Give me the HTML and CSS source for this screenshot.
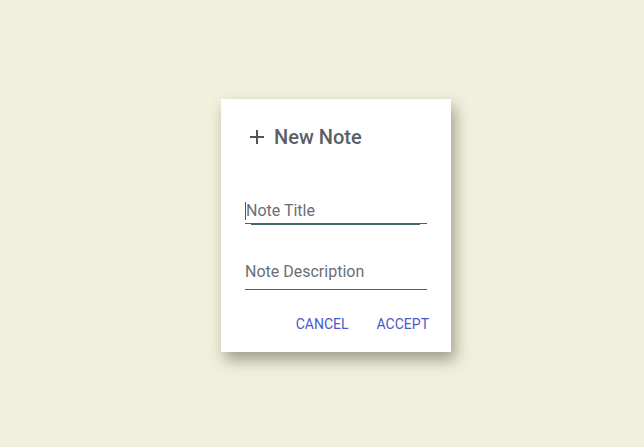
FILE: index.html
```html
<!DOCTYPE html>
<html>
<head>
<meta charset="utf-8">
<link rel="stylesheet" href="styles.css">
</head>
<body>
<div class="stage">
  <div class="card">
    <div class="header">
      <svg class="plus" width="14" height="14" viewBox="0 0 14 14"><path d="M7 0V14M0 7H14" stroke="#50555a" stroke-width="2"/></svg>
      <span class="title">New Note</span>
    </div>
    <div class="field focused">
      <span class="caret"></span><span class="label">Note Title</span>
      <span class="focus-line"></span>
    </div>
    <div class="field desc">
      <span class="label">Note Description</span>
    </div>
    <div class="actions">
      <span class="btn">CANCEL</span>
      <span class="btn">ACCEPT</span>
    </div>
  </div>
</div>
</body>
</html>
```
FILE: styles.css
```css
html, body { margin: 0; padding: 0; }
body {
  background: #f0f0dc;
  font-family: Roboto, "Noto Sans", sans-serif;
  width: 644px;
  height: 447px;
  overflow: hidden;
}
.stage {
  padding: 99px 0 0 221px;
}
.card {
  width: 230px;
  height: 253px;
  box-sizing: border-box;
  background: #fff;
  box-shadow: 4px 8px 14px rgba(60, 60, 40, 0.45);
  padding: 24px 24px 0 24px;
}
.header {
  display: flex;
  align-items: center;
  height: 28px;
  padding-left: 5px;
  gap: 10px;
}
.plus { display: block; }
.title {
  font-size: 20px;
  font-weight: 500;
  color: #5a5f66;
}
.field {
  position: relative;
  margin-top: 47px;
  width: 182px;
  height: 25px;
  border-bottom: 1px solid #5a5f66;
  display: flex;
  align-items: center;
}
.field.desc {
  margin-top: 35px;
  padding-bottom: 5px;
}
.label {
  font-size: 16px;
  color: #6a6f74;
}
.caret {
  display: inline-block;
  width: 1px;
  height: 18px;
  background: #555;
}
.focus-line {
  position: absolute;
  left: 6px;
  right: 7px;
  bottom: -2px;
  height: 2px;
  background: #3e6a6a;
}
.actions {
  display: flex;
  justify-content: flex-end;
  gap: 28px;
  margin-top: 26px;
  width: 184px;
}
.btn {
  font-size: 14px;
  color: #4a59c9;
}
```
